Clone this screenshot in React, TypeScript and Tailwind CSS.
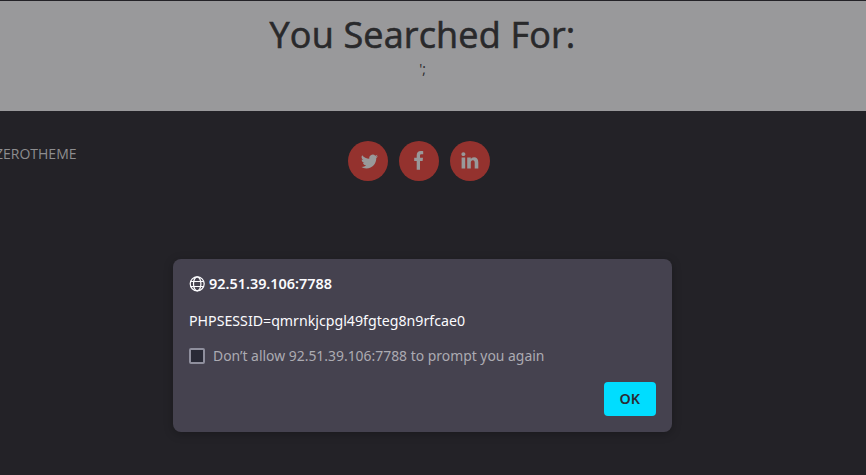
import React from "react";

function Social({ label, children }: { label: string; children: React.ReactNode }) {
  return (
    <a
      aria-label={label}
      className="flex size-10 items-center justify-center rounded-full bg-[#94322e] text-[#99999a]"
    >
      {children}
    </a>
  );
}

function Globe() {
  return (
    <svg viewBox="0 0 16 16" className="size-4 shrink-0" fill="none" stroke="#fbfbfe" strokeWidth="1.2">
      <circle cx="8.2" cy="7.8" r="7" />
      <ellipse cx="8.2" cy="7.8" rx="3.7" ry="7" />
      <path d="M1.6 5.5h13.2M1.6 10.5h13.2" />
    </svg>
  );
}

export default function App() {
  return (
    <div className="flex h-[475px] w-[866px] flex-col overflow-hidden bg-[#232227] font-['Open_Sans',sans-serif]">
      <header className="mt-px h-[110px] shrink-0 bg-[#99999b] pr-[21px] pt-[9px] text-center text-[#29292b]">
        <h1 className="text-[36px] font-medium leading-[50px] tracking-[0.16px] [-webkit-text-stroke:0.6px_#29292b]">
          You Searched For:
        </h1>
        <p className="-mt-px text-sm leading-5">';</p>
      </header>

      <footer className="flex h-[148px] shrink-0 items-start pt-[30px]">
        <div className="flex w-[348px] shrink-0">
          <span className="-ml-[5px] mt-[3px] text-sm leading-5 text-[#8d8d8f]">ZEROTHEME</span>
        </div>
        <nav className="flex gap-[11px]">
          <Social label="Twitter">
            <svg viewBox="0 0 24 24" className="ml-[3px] size-[17px]" fill="currentColor">
              <path d="M23.95 4.57a10 10 0 0 1-2.82.77 4.96 4.96 0 0 0 2.16-2.72c-.95.55-2 .95-3.13 1.18a4.92 4.92 0 0 0-8.38 4.48C7.69 8.1 4.07 6.13 1.64 3.16a4.92 4.92 0 0 0 1.52 6.57 4.9 4.9 0 0 1-2.23-.61v.06a4.92 4.92 0 0 0 3.95 4.83 5 5 0 0 1-2.21.08 4.94 4.94 0 0 0 4.6 3.42A9.87 9.87 0 0 1 0 19.54a13.99 13.99 0 0 0 7.55 2.21c9.05 0 14-7.5 14-13.98 0-.21 0-.42-.02-.63a9.94 9.94 0 0 0 2.42-2.57z" />
            </svg>
          </Social>
          <Social label="Facebook">
            <svg viewBox="0 0 10 19" className="-mt-0.5 h-[19px] w-2.5" fill="currentColor">
              <path d="M9.2.2V3.2H7.5C6.2 3.2 6 3.8 6 4.7v2H9L8.6 9.9H6V18.7H2.7V9.9H.2V6.7h2.5V4.3C2.7 1.5 4.3 0 6.8 0c1.1 0 2 .1 2.4.2z" />
            </svg>
          </Social>
          <Social label="LinkedIn">
            <svg viewBox="0 0 18 17" className="-mt-0.5 h-[17px] w-[18px]" fill="currentColor">
              <path d="M.6 5.6h3.6v11H.6zM2.4.3C3.6.3 4.4 1.1 4.4 2.2S3.6 4.1 2.4 4.1.4 3.3.4 2.2 1.2.3 2.4.3zM6.2 5.6h3.6v1.5c.5-.8 1.4-1.8 3.3-1.8 2.5 0 4.2 1.6 4.2 5v6.3h-3.6v-5.9c0-1.5-.5-2.5-1.8-2.5-1.4 0-2.1 1-2.1 2.5v5.9H6.2z" />
            </svg>
          </Social>
        </nav>
      </footer>

      <section
        role="dialog"
        className="ml-[173px] flex h-[173px] w-[499px] shrink-0 flex-col rounded-lg bg-[#45424f] px-4 pt-[14px] font-['Noto_Sans',sans-serif] text-[15px] text-[#fbfbfe] shadow-[0_2px_10px_rgba(0,0,0,0.25)]"
      >
        <div className="flex h-5 items-center gap-1">
          <span className="mt-px">
            <Globe />
          </span>
          <strong className="origin-left scale-x-[0.96] font-semibold leading-5">92.51.39.106:7788</strong>
        </div>
        <p className="mt-[17px] origin-left scale-x-[0.945] leading-5">PHPSESSID=qmrnkjcpgl49fgteg8n9rfcae0</p>
        <label className="mt-4 flex h-5 items-center gap-2 text-[#acabb2]">
          <span className="size-4 shrink-0 rounded-[2px] border-2 border-[#8f8f9d] bg-[#292a36]" />
          <span className="-mt-0.5 origin-left scale-x-[0.927] whitespace-nowrap leading-5">
            Don’t allow 92.51.39.106:7788 to prompt you again
          </span>
        </label>
        <button className="mt-4 h-[34px] w-[52px] self-end rounded bg-[#00ddff] pb-0.5 font-semibold text-[#2b2a33]">
          <span className="inline-block scale-x-[0.95]">OK</span>
        </button>
      </section>
    </div>
  );
}
